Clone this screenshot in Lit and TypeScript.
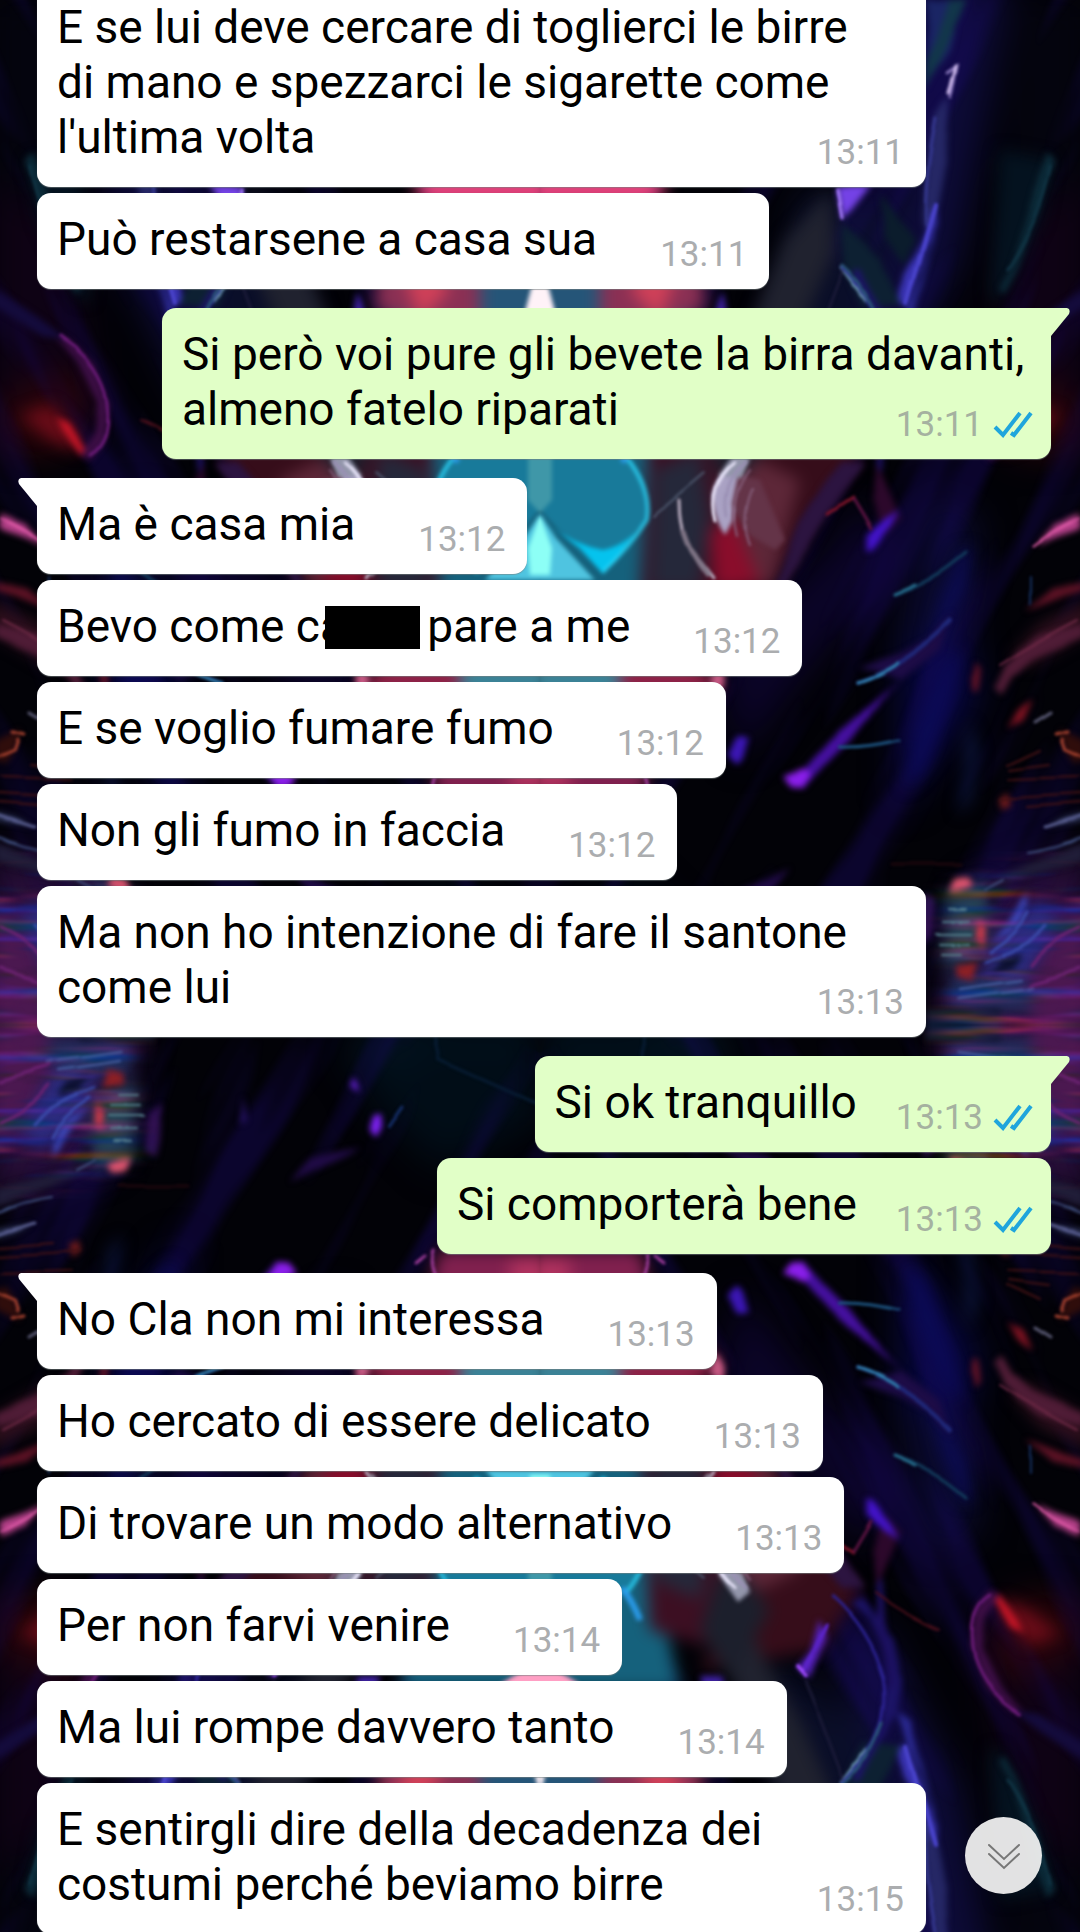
import { LitElement, html, css, svg, nothing } from "lit";
import { customElement, property } from "lit/decorators.js";
import { classMap } from "lit/directives/class-map.js";

interface Message {
  /** One entry for each line of the text; "█" stands for a blacked-out word. */
  lines: string[];
  time: string;
  mine?: boolean;
  /** First message of a run: drawn with a tail. */
  first?: boolean;
}

const MESSAGES: Message[] = [
  {
    lines: ["E se lui deve cercare di toglierci le birre", "di mano e spezzarci le sigarette come", "l'ultima volta"],
    time: "13:11",
  },
  { lines: ["Può restarsene a casa sua"], time: "13:11" },
  {
    lines: ["Si però voi pure gli bevete la birra davanti,", "almeno fatelo riparati"],
    time: "13:11",
    mine: true,
    first: true,
  },
  { lines: ["Ma è casa mia"], time: "13:12", first: true },
  { lines: ["Bevo come ca█ pare a me"], time: "13:12" },
  { lines: ["E se voglio fumare fumo"], time: "13:12" },
  { lines: ["Non gli fumo in faccia"], time: "13:12" },
  { lines: ["Ma non ho intenzione di fare il santone", "come lui"], time: "13:13" },
  { lines: ["Si ok tranquillo"], time: "13:13", mine: true, first: true },
  { lines: ["Si comporterà bene"], time: "13:13", mine: true },
  { lines: ["No Cla non mi interessa"], time: "13:13", first: true },
  { lines: ["Ho cercato di essere delicato"], time: "13:13" },
  { lines: ["Di trovare un modo alternativo"], time: "13:13" },
  { lines: ["Per non farvi venire"], time: "13:14" },
  { lines: ["Ma lui rompe davvero tanto"], time: "13:14" },
  { lines: ["E sentirgli dire della decadenza dei", "costumi perché beviamo birre"], time: "13:15" },
];

/** One quarter of the wallpaper; the other three are reflections of it. */
const quarter = svg`
  <g id="quarter" clip-path="url(#quarter-clip)">
    <rect x="540" y="0" width="540" height="1026" fill="#020207"/>
    <g filter="url(#b20)">
      <path d="M860-20L1010-20L960 260L880 420L830 420L900 200Z" fill="#0d0b38"/>
      <path d="M1010 0L1090 0L1090 200L1000 180Z" fill="#04040e"/>
      <path d="M800 190L900 200L860 330L760 400Z" fill="#0a0e28"/>
      <path d="M1010 220L1090 180V440L980 420Z" fill="#0e0214"/>
      <path d="M720 660L840 540L860 500L900 560L800 680L740 760Z" fill="#0b0428"/>
      <path d="M900 640L960 600L980 700L900 810Z" fill="#07073e"/>
      <path d="M930 500L980 520L960 640L900 640Z" fill="#0a0a30"/>
      <path d="M970 890L1090 850V1030H940Z" fill="#2a0f3c"/>
      <path d="M560 990L640 950L740 990L700 1030H540Z" fill="#02121f"/>
      <path d="M540 930L640 880L720 960L640 1010H540Z" fill="#010d17"/>
      <path d="M985 400L1010 370L1080 400V450L1020 455Z" fill="#2a0409"/>
    </g>
    <rect x="200" y="-100" width="1300" height="1100" transform="rotate(-62 810 450)" filter="url(#streaks)" opacity="0.4"/>
    <g filter="url(#b8)">
      <path d="M530 360L680 360L665 430L650 600H530Z" fill="#15617c"/>
      <path d="M650 420L720 400L790 440L840 470L775 590L640 600Z" fill="#3c0f22"/>
      <path d="M655 470L700 450L710 520L700 590L650 590Z" fill="#25283a"/>
      <path d="M700 380L820 400L860 460L780 560L740 460Z" fill="#360d1a"/>
      <path d="M720 480L760 460L800 480L770 590L725 560Z" fill="#5d2738"/>
      <path d="M710 530L735 520L760 585L715 590Z" fill="#8a0d2b"/>
      <path d="M530 340H690V250L530 240Z" fill="#255578"/>
      <path d="M600 330L600 240L700 230L705 310L640 330Z" fill="#8a3054"/>
      <path d="M630 290L660 240L690 240L660 320Z" fill="#d04058"/>
      <path d="M530 205H650L668 188L640 160H530Z" fill="#e3427c"/>
      <path d="M530 210H620L570 250H530Z" fill="#bb2e5c"/>
      <path d="M785 240L830 190L835 250L800 330L760 400L740 440L720 400Z" fill="#20222f"/>
      <path d="M720 480L700 420L730 370L770 440L740 480Z" fill="#1c1f2c"/>
      <path d="M530 640H580L630 650L650 720H530Z" fill="#3b8296"/>
      <path d="M620 660H690L722 685L700 710H620Z" fill="#8d2247"/>
      <path d="M530 800H640L650 770L620 740H530Z" fill="#80204e"/>
      <path d="M530 790H570V760H530Z" fill="#b0325e"/>
      <path d="M1000 150L1052 160L1040 220L1000 300L990 300Z" fill="#04121f"/>
      <path d="M960 550L972 548L966 590L940 640L920 680L940 600Z" fill="#0c0c50"/>
      <path d="M945 660L960 650L950 700L925 770L905 790L915 730Z" fill="#0b0a55"/>
      <path d="M968 720L978 750L970 800L958 815L966 770Z" fill="#0d1746"/>
      <path d="M948 890L990 880L985 950L945 970Z" fill="#254254"/>
      <path d="M985 970L1000 930L1040 900L1060 920L1020 990Z" fill="#2c2c80"/>
      <path d="M1090 900L1060 920L1030 985L1030 1030H1090Z" fill="#4b1850"/>
      <path d="M950 975L1020 975L1035 1010H950Z" fill="#223262"/>
      <path d="M1090 600L1040 625L1010 660L1030 665L1090 630Z" fill="#30101e"/>
      <path d="M1000 452L1030 440L1060 415L1030 405L1005 430Z" fill="#6a0c18"/>
    </g>
    <g filter="url(#b3)">
      <path d="M926 0H962L950 50L926 85Z" fill="#1a2564"/>
      <path d="M951 0L968 0L926 90V60Z" fill="#12364a"/>
      <path d="M935 115L950 98L948 140L942 200L930 232L922 225L928 160Z" fill="#252765"/>
      <path d="M937 202L938 222L920 270L910 308L900 306L906 272L924 240Z" fill="#3a34b4"/>
      <path d="M836 187H872L858 205L843 220Z" fill="#7442e6"/>
      <path d="M843 225L880 260L905 308L865 308L842 262Z" fill="#0d2032"/>
      <path d="M880 195L900 225L915 240L904 265L885 240Z" fill="#0b1c2c"/>
      <path d="M1046 155L1055 162L1042 205L1018 260L1004 295L1000 290L1024 230Z" fill="#0c2c3a"/>
      <path d="M714 312L724 290L727 308L722 370L700 370Z" fill="#3f22a4"/>
      <path d="M794 386L806 374L826 415L816 432L808 402Z" fill="#5420b6"/>
      <path d="M850 445L870 430L890 385L886 330L850 268L860 268L900 340L902 370L892 410L860 450Z" fill="#1c1466"/>
      <path d="M874 480L876 420L892 360L898 370L884 430L880 470Z" fill="#1c1060"/>
      <path d="M900 340L925 270L940 220L936 240L912 330Z" fill="#2b2a94"/>
      <path d="M990 460L1000 456L1016 434L1024 420L1010 424L1000 440Z" fill="#c21526"/>
      <path d="M1000 455L990 462L975 440L970 400L985 360L1010 340L1030 330L1000 362L982 400L984 430Z" fill="#3c0e44"/>
      <path d="M1010 340L1070 300L1085 290V310L1040 335Z" fill="#140b3c"/>
      <path d="M840 462L862 462L780 590L772 590L800 520Z" fill="#2c1440"/>
      <path d="M874 462L900 520L885 536L870 500Z" fill="#2c082b"/>
      <path d="M866 537L898 510L892 525L872 550L864 552Z" fill="#4313c9"/>
      <path d="M857 668L900 655L930 640L955 612L940 650L900 680Z" fill="#1d0c46"/>
      <path d="M805 788L790 788L786 780L806 768L840 730L900 680L890 690L850 740L815 775Z" fill="#4510a0"/>
      <path d="M782 780L806 768L812 775L803 788L790 789Z" fill="#8a1eea"/>
      <path d="M735 765L728 755L740 735L750 738L742 758Z" fill="#3b16b4"/>
      <path d="M726 670L728 686L718 700L712 680Z" fill="#c85a84"/>
      <path d="M1080 514L1058 523L1036 547L1052 540L1082 530Z" fill="#b7418b"/>
      <path d="M1085 582L1050 592L1025 613L1040 608L1085 590Z" fill="#5c1225"/>
      <path d="M1085 624L1040 634L1004 665L994 690L1000 698L1010 678L1035 658L1085 636Z" fill="#4f1c36"/>
      <path d="M980 660L974 680L974 694L980 690L984 668Z" fill="#601226"/>
      <path d="M1030 700L1015 712L1006 730L1020 724Z" fill="#7b1220"/>
      <path d="M1085 740L1060 728L1064 750L1074 765L1085 762Z" fill="#2f0d0b"/>
      <path d="M1000 800L1010 792L1012 806L1002 810Z" fill="#6c1a1c"/>
      <path d="M1085 820L1050 828L1064 818L1085 812Z" fill="#2a3052"/>
      <path d="M1085 842L1030 862L990 882L1010 880L1085 858Z" fill="#201d38"/>
      <path d="M954 880L968 877L972 887L958 893L949 893Z" fill="#dd5568"/>
      <path d="M978 918L986 925L982 948L974 935Z" fill="#c8384a"/>
      <path d="M956 962L976 957L973 978L957 974Z" fill="#8b2025"/>
      <path d="M1030 890L1028 908L1018 925L990 942L1010 922Z" fill="#3d48b8"/>
      <path d="M1000 958L1022 952L1012 968L988 974Z" fill="#0d1030"/>
      <path d="M985 885L1010 880L1000 900L990 905Z" fill="#0d0d22"/>
      <path d="M926 1010H1000V1030H926Z" fill="#0f1832"/>
      <path d="M920 910L924 895L936 900L930 935L918 945Z" fill="#2e1050"/>
      <path d="M722 958L731 963L726 974Z" fill="#6e22e6"/>
      <path d="M698 937L706 936L711 922L704 915L697 924Z" fill="#7d22f4"/>
      <path d="M832 930L836 955L839 925Z" fill="#261268"/>
      <path d="M740 890L790 865L770 890L720 905Z" fill="#200b46"/>
    </g>
    <path d="M940 900L1000 870L1090 860V1030H930L960 980Z" filter="url(#grain)" opacity="0.6"/>
    <g filter="url(#b2)">
      <path d="M530 455H627Q650 480 649 515L603 574L568 540L541 510H530Z" fill="#187a9a"/>
      <path d="M548 525L580 548L603 574L649 515Q630 545 603 550Q575 545 548 525Z" fill="#05c3ee"/>
      <path d="M530 455H552V500L541 512H530Z" fill="#3f97a8"/>
      <path d="M541 515L556 538L595 580H530V515Z" fill="#4fc4e0"/>
      <path d="M541 518L552 548L550 575H530V518Z" fill="#8dfff6"/>
      <path d="M712 495Q716 470 745 458L738 480L733 520L725 535Q714 520 712 495Z" fill="#aaa2c4"/>
      <path d="M738 475L760 480L785 540L775 550L750 535L732 505Z" fill="#643448"/>
      <path d="M530 315L540 255L556 315Z" fill="#fff2f8"/>
      <path d="M530 385H548L580 366L560 360H530Z" fill="#ff9fc4"/>
      <path d="M718 476L738 448L750 458L742 478Z" fill="#9396ab"/>
      <path d="M627 458Q652 490 647 520Q630 546 603 572" stroke="#2edcff" stroke-width="3" fill="none"/>
      <path d="M640 430Q632 450 622 462" stroke="#2a9bea" stroke-width="6" fill="none"/>
    </g>
    <g filter="url(#b1)" fill="none" stroke-linecap="round">
      <path d="M655 515L705 473" stroke="#505a70" stroke-width="2"/>
      <path d="M680 500Q680 530 692 550L714 578" stroke="#b9adc0" stroke-width="3"/>
      <path d="M684 530Q690 550 708 574" stroke="#7f7485" stroke-width="5"/>
      <path d="M717 520Q708 485 736 462" stroke="#eeeaff" stroke-width="3"/>
      <path d="M728 515Q722 485 746 462" stroke="#9a90b4" stroke-width="3"/>
      <path d="M738 535Q728 500 750 470M750 545Q740 520 752 490" stroke="#86607c" stroke-width="2"/>
      <path d="M852 498L828 514" stroke="#81142a" stroke-width="3"/>
      <path d="M852 500L870 530" stroke="#5c1442" stroke-width="3"/>
      <path d="M893 595Q930 585 968 552" stroke="#123a5a" stroke-width="3"/>
      <path d="M893 595L915 585" stroke="#27708f" stroke-width="3"/>
      <path d="M857 683Q910 665 953 620" stroke="#1f2878" stroke-width="4"/>
      <path d="M857 683Q880 676 897 664" stroke="#3080ac" stroke-width="3"/>
      <path d="M840 747Q870 748 900 740" stroke="#1d5480" stroke-width="3"/>
      <path d="M1028 580V606" stroke="#142f60" stroke-width="2"/>
      <path d="M1032 548Q1055 530 1080 520" stroke="#e05ca8" stroke-width="2"/>
      <path d="M1000 665Q1040 640 1078 620" stroke="#6b2844" stroke-width="2"/>
      <path d="M1056 733L1068 730M1062 738L1066 750L1084 758" stroke="#a3402e" stroke-width="3"/>
      <path d="M1008 765L1040 750M1010 780L1080 778M1002 800L1080 795M1010 770L1050 765M1030 808L1080 804" stroke="#431215" stroke-width="2"/>
      <path d="M1034 722L1050 712" stroke="#5a5a74" stroke-width="3"/>
      <path d="M1048 828L1084 816" stroke="#565b8c" stroke-width="3"/>
      <path d="M1030 852Q1060 848 1084 836M985 890L1004 880" stroke="#3d4c7a" stroke-width="2"/>
      <path d="M890 866H960" stroke="#1c070d" stroke-width="3"/>
      <path d="M942 920H968M936 932H970M940 942H968M942 952H960M948 908H965" stroke="#567f8c" stroke-width="2"/>
      <path d="M990 950Q1015 935 1028 912M985 960Q1030 945 1046 925" stroke="#3a4aa8" stroke-width="3"/>
      <path d="M960 988L1020 979M958 998L1030 988" stroke="#4b62a4" stroke-width="2"/>
      <path d="M1030 965Q1050 940 1080 928M1028 985L1080 970" stroke="#6b2272" stroke-width="3"/>
      <path d="M948 75L958 68L952 100" stroke="#8a78bc" stroke-width="3"/>
      <path d="M957 68L950 96" stroke="#d4c0f0" stroke-width="3"/>
      <path d="M936 120Q924 180 926 225" stroke="#353890" stroke-width="3"/>
      <path d="M936 206Q920 260 908 304" stroke="#4a44cc" stroke-width="4"/>
      <path d="M841 266L868 302" stroke="#6692a8" stroke-width="3"/>
      <path d="M838 190L843 219" stroke="#a87cff" stroke-width="3"/>
      <path d="M1050 168Q1040 220 1008 270" stroke="#103444" stroke-width="3"/>
      <path d="M842 266Q895 320 884 372Q870 420 832 454" stroke="#2b2290" stroke-width="3"/>
      <path d="M842 264Q870 290 884 330" stroke="#2a5678" stroke-width="3"/>
      <path d="M800 380L826 425" stroke="#5b24c8" stroke-width="4"/>
      <path d="M795 386L804 376" stroke="#a04aff" stroke-width="4"/>
      <path d="M804 370L842 270" stroke="#22203e" stroke-width="2"/>
      <path d="M874 456Q900 435 940 418" stroke="#4e101c" stroke-width="2"/>
      <path d="M990 455Q964 440 974 390Q985 355 1020 335" stroke="#6b1b78" stroke-width="3"/>
      <path d="M646 1020L640 990L540 945" stroke="#071c33" stroke-width="3"/>
      <path d="M676 945L690 925" stroke="#152f6a" stroke-width="3"/>
      <path d="M646 800Q652 780 636 760M655 795L664 788" stroke="#a03c9a" stroke-width="3"/>
    </g>
  </g>`;

@customElement("chat-wallpaper")
export class ChatWallpaper extends LitElement {
  static styles = css`
    :host {
      display: block;
      background: #020207;
    }
    .art {
      display: block;
      width: 100%;
      height: 100%;
    }
    filter {
      color-interpolation-filters: sRGB;
    }
  `;

  render() {
    return html`
      <svg class="art" viewBox="0 0 1080 1932" preserveAspectRatio="xMidYMid slice" aria-hidden="true">
        <defs>
          <filter id="b1" x="-5%" y="-5%" width="110%" height="110%">
            <feTurbulence type="fractalNoise" baseFrequency="0.012" numOctaves="1" seed="4" result="n" />
            <feDisplacementMap in="SourceGraphic" in2="n" scale="14" xChannelSelector="R" yChannelSelector="G" />
            <feGaussianBlur stdDeviation="1.5" />
          </filter>
          <filter id="b2" x="-5%" y="-5%" width="110%" height="110%"><feGaussianBlur stdDeviation="2" /></filter>
          <filter id="b3" x="-5%" y="-5%" width="110%" height="110%">
            <feTurbulence type="fractalNoise" baseFrequency="0.012" numOctaves="2" seed="4" result="n" />
            <feDisplacementMap in="SourceGraphic" in2="n" scale="14" xChannelSelector="R" yChannelSelector="G" />
            <feGaussianBlur stdDeviation="3" />
          </filter>
          <filter id="b8" x="-5%" y="-5%" width="110%" height="110%"><feGaussianBlur stdDeviation="8" /></filter>
          <filter id="b20" x="-10%" y="-10%" width="120%" height="120%"><feGaussianBlur stdDeviation="18" /></filter>
          <filter id="streaks" x="0" y="0" width="100%" height="100%">
            <feTurbulence type="fractalNoise" baseFrequency="0.003 0.02" numOctaves="3" seed="9" />
            <feColorMatrix values="0 0 0 0 0.1  0 0 0 0 0.04  0 0 0 0 0.4  4 0 0 0 -2" />
            <feGaussianBlur stdDeviation="2" />
          </filter>
          <filter id="grain" x="-5%" y="-5%" width="110%" height="110%">
            <feGaussianBlur in="SourceAlpha" stdDeviation="14" result="soft" />
            <feTurbulence type="fractalNoise" baseFrequency="0.008 0.07" numOctaves="3" seed="7" />
            <feColorMatrix values="2 0 0 0 -0.7  0 0.6 0 0 -0.15  0 0 1.6 0 -0.4  0 4 0 0 -1.6" />
            <feComposite in2="soft" operator="in" />
            <feGaussianBlur stdDeviation="1" />
          </filter>
          <clipPath id="quarter-clip"><rect x="540" y="0" width="540" height="1025" /></clipPath>
        </defs>
        ${quarter}
        <use href="#quarter" transform="matrix(-1 0 0 1 1080 0)" />
        <use href="#quarter" transform="matrix(1 0 0 -1 0 2050)" />
        <use href="#quarter" transform="matrix(-1 0 0 -1 1080 2050)" />
      </svg>
    `;
  }
}

@customElement("chat-bubble")
export class ChatBubble extends LitElement {
  @property({ attribute: false }) message!: Message;

  static styles = css`
    :host {
      display: flex;
    }
    .bubble {
      position: relative;
      box-sizing: border-box;
      max-width: calc(100% - 125px);
      padding: 19px 22px 22px 20px;
      border-radius: 14px;
      background: #fff;
      color: #000;
      font-size: 46px;
      line-height: 55px;
      white-space: pre;
      box-shadow: 0 1px 1px rgba(120, 130, 130, 0.6);
    }
    .wide {
      width: 100%;
    }
    .mine {
      margin-left: auto;
      padding-right: 18px;
      background: #e1ffc7;
    }
    .first {
      border-top-left-radius: 0;
    }
    .first.mine {
      border-top-left-radius: 14px;
      border-top-right-radius: 0;
    }
    .tail {
      position: absolute;
      top: 0;
      right: 100%;
      width: 19px;
      height: 28px;
      fill: #fff;
    }
    .mine .tail {
      right: auto;
      left: 100%;
      fill: #e1ffc7;
    }
    .line {
      display: block;
    }
    .last {
      display: flex;
      align-items: flex-end;
      justify-content: space-between;
      gap: 63px;
    }
    .mine .last {
      gap: 39px;
    }
    .redacted {
      display: inline-block;
      width: 95px;
      height: 43px;
      margin: 0 -4px 0 -20px;
      vertical-align: -7px;
      background: #000;
    }
    .meta {
      display: flex;
      align-items: center;
      gap: 10px;
      height: 27px;
      margin-bottom: -1px;
      font-size: 35px;
      line-height: 27px;
      color: #abadaf;
    }
    .mine .meta {
      color: #a5b1a0;
    }
    .ticks {
      width: 40px;
      height: 27px;
      fill: none;
      stroke: #1fa5dc;
      stroke-width: 4;
    }
  `;

  private renderText(text: string) {
    const [before, after] = text.split("█");
    return after === undefined ? before : html`${before}<span class="redacted"></span>${after}`;
  }

  render() {
    const { lines, time, mine = false, first = false } = this.message;
    const wide = lines.length > 1;
    const tail = mine
      ? svg`<path d="M0 0H16Q20 1 18 6L0 28Z"/>`
      : svg`<path d="M19 0H3Q-1 1 1 6L19 28Z"/>`;
    return html`
      <div class=${classMap({ bubble: true, mine, first, wide })}>${
        first ? html`<svg class="tail" viewBox="0 0 19 28" aria-hidden="true">${tail}</svg>` : nothing
      }${lines.slice(0, -1).map((line) => html`<span class="line">${this.renderText(line)}</span>`)}<span
          class="last"
          ><span>${this.renderText(lines[lines.length - 1])}</span
          ><span class="meta"
            ><time>${time}</time>${
              mine
                ? html`<svg class="ticks" viewBox="0 0 40 27" aria-hidden="true">
                    <path d="M2 16L10 24L27 2M18 22L21 24L38 2" />
                  </svg>`
                : nothing
            }</span
          ></span
        ></div>
    `;
  }
}

@customElement("app-root")
export class AppRoot extends LitElement {
  static styles = css`
    :host {
      position: relative;
      display: block;
      height: 100vh;
      overflow: hidden;
      font-family: Roboto, "Noto Sans", sans-serif;
    }
    .wallpaper {
      position: absolute;
      inset: 0;
    }
    .thread {
      position: relative;
      display: flex;
      flex-direction: column;
      justify-content: flex-end;
      gap: 6px;
      box-sizing: border-box;
      height: calc(100% + 2px);
      padding: 0 29px 0 37px;
    }
    .row {
      flex: none;
    }
    .run {
      margin-top: 13px;
    }
    .to-end {
      position: absolute;
      right: 38px;
      bottom: 38px;
      display: grid;
      place-items: center;
      width: 77px;
      height: 77px;
      padding: 0;
      border: 0;
      border-radius: 50%;
      background: rgba(238, 238, 238, 0.95);
    }
    .chevrons {
      width: 32px;
      height: 28px;
      fill: none;
      stroke: #777;
      stroke-width: 2;
      stroke-linecap: round;
    }
  `;

  render() {
    return html`
      <chat-wallpaper class="wallpaper"></chat-wallpaper>
      <main class="thread">
        ${MESSAGES.map(
          (message) => html`
            <chat-bubble class=${classMap({ row: true, run: !!message.first })} .message=${message}></chat-bubble>
          `,
        )}
      </main>
      <button class="to-end" type="button" aria-label="Vai all'ultimo messaggio">
        <svg class="chevrons" viewBox="0 0 32 28" aria-hidden="true">
          <path d="M1 3L16 17L31 3M1 12L16 26L31 12" />
        </svg>
      </button>
    `;
  }
}
